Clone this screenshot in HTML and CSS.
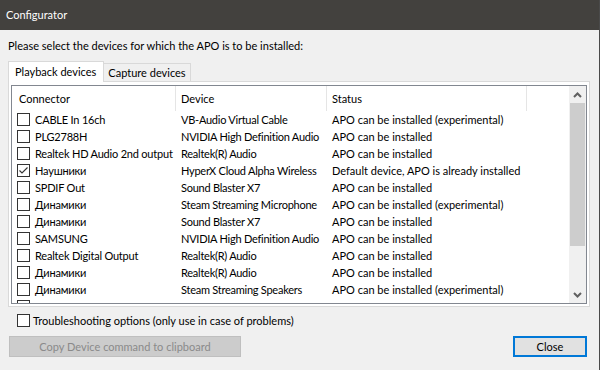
FILE: index.html
```html
<!DOCTYPE html>
<html lang="en">
  <head>
    <meta charset="UTF-8" />
    <title>Configurator</title>
    <link rel="stylesheet" href="styles.css">
  </head>
  <body>
    <div class="window">
      <!-- Barra de título -->
      <div class="titlebar">Configurator</div>

      <div class="main">
        <div class="prompt">Please select the devices for which the APO is to be installed:</div>

        <!-- Pestañas -->
        <div class="tabs">
          <div class="tab active">Playback devices</div>
          <div class="tab">Capture devices</div>
        </div>

        <div class="panel">
          <div class="list">
            <div class="list-body">
              <div class="row header">
                <div class="cell c1 head">Connector</div>
                <div class="cell c2 head">Device</div>
                <div class="cell c3 head">Status</div>
              </div>

              <div class="row">
                <div class="cell c1"><span class="box"></span>CABLE In 16ch</div>
                <div class="cell c2">VB-Audio Virtual Cable</div>
                <div class="cell c3">APO can be installed (experimental)</div>
              </div>
              <div class="row">
                <div class="cell c1"><span class="box"></span>PLG2788H</div>
                <div class="cell c2">NVIDIA High Definition Audio</div>
                <div class="cell c3">APO can be installed</div>
              </div>
              <div class="row">
                <div class="cell c1"><span class="box"></span>Realtek HD Audio 2nd output</div>
                <div class="cell c2">Realtek(R) Audio</div>
                <div class="cell c3">APO can be installed</div>
              </div>
              <div class="row">
                <div class="cell c1">
                  <span class="box">
                    <svg width="11" height="11" viewBox="0 0 11 11"><polyline points="1.5,5.5 4,8 9.5,2.5" fill="none" stroke="#333" stroke-width="1.1"/></svg>
                  </span>Наушники
                </div>
                <div class="cell c2">HyperX Cloud Alpha Wireless</div>
                <div class="cell c3">Default device, APO is already installed</div>
              </div>
              <div class="row">
                <div class="cell c1"><span class="box"></span>SPDIF Out</div>
                <div class="cell c2">Sound Blaster X7</div>
                <div class="cell c3">APO can be installed</div>
              </div>
              <div class="row">
                <div class="cell c1"><span class="box"></span>Динамики</div>
                <div class="cell c2">Steam Streaming Microphone</div>
                <div class="cell c3">APO can be installed (experimental)</div>
              </div>
              <div class="row">
                <div class="cell c1"><span class="box"></span>Динамики</div>
                <div class="cell c2">Sound Blaster X7</div>
                <div class="cell c3">APO can be installed</div>
              </div>
              <div class="row">
                <div class="cell c1"><span class="box"></span>SAMSUNG</div>
                <div class="cell c2">NVIDIA High Definition Audio</div>
                <div class="cell c3">APO can be installed</div>
              </div>
              <div class="row">
                <div class="cell c1"><span class="box"></span>Realtek Digital Output</div>
                <div class="cell c2">Realtek(R) Audio</div>
                <div class="cell c3">APO can be installed</div>
              </div>
              <div class="row">
                <div class="cell c1"><span class="box"></span>Динамики</div>
                <div class="cell c2">Realtek(R) Audio</div>
                <div class="cell c3">APO can be installed</div>
              </div>
              <div class="row">
                <div class="cell c1"><span class="box"></span>Динамики</div>
                <div class="cell c2">Steam Streaming Speakers</div>
                <div class="cell c3">APO can be installed (experimental)</div>
              </div>
              <!-- fila cortada por el borde inferior -->
              <div class="row">
                <div class="cell c1"><span class="box"></span></div>
              </div>
            </div>

            <!-- Barra de desplazamiento -->
            <div class="scrollbar">
              <div class="arrow">
                <svg width="9" height="6" viewBox="0 0 9 6"><polyline points="1,5 4.5,1.5 8,5" fill="none" stroke="#606060" stroke-width="2"/></svg>
              </div>
              <div class="thumb"></div>
              <div class="track"></div>
              <div class="arrow">
                <svg width="9" height="6" viewBox="0 0 9 6"><polyline points="1,1 4.5,4.5 8,1" fill="none" stroke="#606060" stroke-width="2"/></svg>
              </div>
            </div>
          </div>
        </div>

        <div class="trouble">
          <span class="box"></span>Troubleshooting options (only use in case of problems)
        </div>

        <div class="buttons">
          <button class="btn disabled">Copy Device command to clipboard</button>
          <button class="btn default">Close</button>
        </div>
      </div>
    </div>
  </body>
</html>
```
FILE: styles.css
```css
/* Ventana */
body {
  margin: 0;
  background: #f0f0f0;
  font-family: 'Lato', sans-serif;
  font-size: 11px;
  color: #000;
}

.window {
  width: 600px;
  height: 370px;
  box-sizing: border-box;
  border-right: 1px solid #4a4a4a;
  background: #f0f0f0;
  overflow: hidden;
}

.titlebar {
  height: 30px;
  line-height: 30px;
  padding-left: 6px;
  background: #43413e;
  color: #fff;
}

.main {
  padding-left: 8px;
}

.prompt {
  margin-top: 8px;
  line-height: 15px;
}

/* Pestañas */
.tabs {
  display: flex;
  align-items: flex-end;
  margin-top: 8px;
}

.tab {
  height: 18px;
  line-height: 17px;
  padding: 0 4px;
  border: 1px solid #d9d9d9;
  border-bottom: none;
  border-left: none;
  box-sizing: border-box;
  background: #f0f0f0;
}

.tab.active {
  position: relative;
  z-index: 1;
  height: 21px;
  line-height: 20px;
  padding: 0 7px 0 6px;
  border-left: 1px solid #d9d9d9;
  background: #fff;
  margin-bottom: -1px;
}

.panel {
  width: 582px;
  height: 226px;
  box-sizing: border-box;
  padding: 3px 2px 2px 2px;
  border: 1px solid #d9d9d9;
  background: #fff;
}

/* Lista */
.list {
  display: flex;
  height: 219px;
  box-sizing: border-box;
  border: 1px solid #828790;
  background: #fff;
}

.list-body {
  flex: 1;
  overflow: hidden;
}

.row {
  display: flex;
  height: 17px;
  line-height: 17px;
  white-space: nowrap;
}

.row.header {
  height: 25px;
  line-height: 25px;
}

.cell {
  display: flex;
  align-items: center;
  box-sizing: border-box;
  overflow: hidden;
}

.c1 {
  width: 164px;
  padding-left: 5px;
  letter-spacing: -0.2px;
}

.c2 {
  width: 151px;
  padding-left: 5px;
  letter-spacing: -0.25px;
}

.c3 {
  width: 200px;
  padding-left: 5px;
}

.head {
  border-right: 1px solid #e5e5e5;
  letter-spacing: 0;
}

.c1.head {
  padding-left: 7px;
}

.box {
  display: inline-flex;
  align-items: center;
  justify-content: center;
  flex: none;
  width: 13px;
  height: 13px;
  box-sizing: border-box;
  border: 1px solid #333;
  background: #fff;
  margin-right: 5px;
}

/* Barra de desplazamiento */
.scrollbar {
  display: flex;
  flex-direction: column;
  width: 17px;
  background: #f0f0f0;
}

.arrow {
  height: 17px;
  display: flex;
  align-items: center;
  justify-content: center;
}

.thumb {
  height: 143px;
  margin: 0 1px;
  background: #cdcdcd;
}

.track {
  flex: 1;
}

/* Opciones y botones */
.trouble {
  display: flex;
  align-items: center;
  margin: 7px 0 0 9px;
  line-height: 13px;
}

.trouble .box {
  margin-right: 3px;
}

.buttons {
  display: flex;
  justify-content: space-between;
  width: 578px;
  margin: 9px 0 0 1px;
}

.btn {
  height: 21px;
  font-family: 'Lato', sans-serif;
  font-size: 11px;
  padding: 0;
  box-sizing: border-box;
}

.btn.disabled {
  width: 232px;
  background: #cccccc;
  border: 1px solid #bfbfbf;
  color: #8a8a8a;
}

.btn.default {
  width: 74px;
  background: #e1e1e1;
  border: 2px solid #0078d7;
  color: #000;
}
```
